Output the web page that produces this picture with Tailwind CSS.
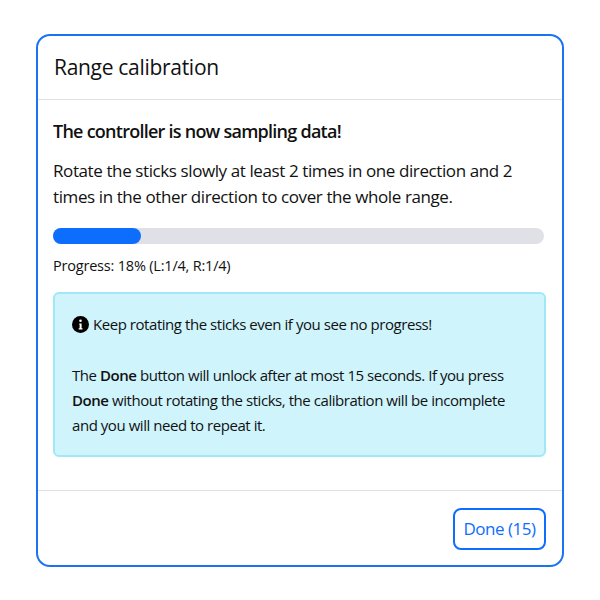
<html lang="en">
<head>
    <meta charset="UTF-8">
    <title>Range calibration</title>
    <script src="https://cdn.jsdelivr.net/npm/@tailwindcss/browser@4"></script>
</head>
<body class="bg-white font-['Open_Sans',sans-serif] text-[#111]">
    <div class="pt-[34px] pl-[36px]">
        <div class="w-[528px] h-[533px] flex flex-col border-2 border-[#1a73f0] rounded-[14px] bg-white">
            <header class="h-[64px] flex items-center px-[16px] pb-[2px] border-b border-[#dfe1e5] shrink-0">
                <h1 class="text-[21px] leading-[28px] tracking-[-0.3px]">Range calibration</h1>
            </header>
            <div class="flex-1 px-[15px] pt-[19px]">
                <h2 class="text-[18px] leading-[24px] font-semibold tracking-[-0.75px]">The controller is now sampling data!</h2>
                <p class="mt-[15px] text-[17px] leading-[26px] tracking-[-0.4px]">Rotate the sticks slowly at least 2 times in one direction and 2 times in the other direction to cover the whole range.</p>
                <div class="mt-[18px] h-[16px] w-[491px] rounded-full bg-[#dfe1e6]">
                    <div class="h-full rounded-full bg-[#0d6efd]" style="width: 18%"></div>
                </div>
                <p class="mt-[12px] text-[14.5px] leading-[20px] tracking-[-0.2px]">Progress: 18% (L:1/4, R:1/4)</p>
                <div class="mt-[16px] w-[493px] h-[165px] rounded-[6px] border-2 border-[#a0e8f6] bg-[#cff4fc] pl-[17px] pr-[15px] pt-[18px] text-[15px] leading-[25px] tracking-[-0.45px]">
                    <p class="flex items-center gap-[4px]">
                        <svg class="w-[17px] h-[17px] shrink-0" viewBox="0 0 17 17">
                            <circle cx="8.5" cy="8.5" r="8.5" fill="#000"/>
                            <circle cx="8.5" cy="4.8" r="1.3" fill="#fff"/>
                            <path d="M7.2 7.4h2.4v4.9h.9v1.1H6.7v-1.1h.9V8.5h-.4z" fill="#fff"/>
                        </svg>
                        <span>Keep rotating the sticks even if you see no progress!</span>
                    </p>
                    <p class="mt-[26px]">The <b class="font-semibold">Done</b> button will unlock after at most 15 seconds. If you press <b class="font-semibold">Done</b> without rotating the sticks, the calibration will be incomplete<br>and you will need to repeat it.</p>
                </div>
            </div>
            <footer class="h-[75px] flex items-center justify-end pr-[16px] pt-[2px] border-t border-[#dfe1e5] shrink-0">
                <button class="w-[93px] h-[42px] rounded-[8px] border-2 border-[#0d6efd] text-[#0d6efd] text-[17px] tracking-[-0.5px]">Done (15)</button>
            </footer>
        </div>
    </div>
</body>
</html>
